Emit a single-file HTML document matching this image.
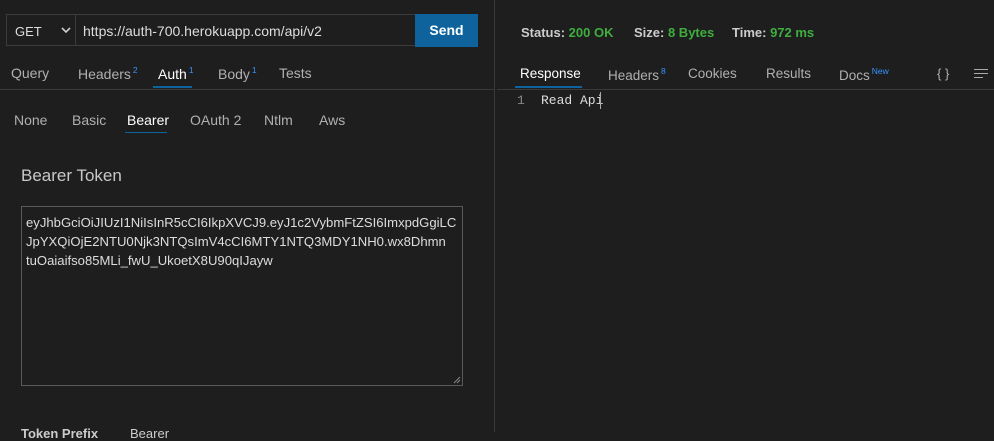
<!DOCTYPE html>
<html><head><style>
body{margin:0;width:994px;height:432px;background:#1e1e1e;font-family:"Liberation Sans",sans-serif;color:#ccc;overflow:hidden;position:relative;font-size:13px}
.a{position:absolute;white-space:nowrap}
sup{font-size:8.5px;color:#3794ff;vertical-align:6px;margin-left:2px}
.t{color:#b0b0b0}
</style></head><body>
<div class="a" style="left:494px;top:0;width:1px;height:432px;background:#3a3a3a"></div>
<div class="a" style="left:6px;top:14px;width:70px;height:32px;border:1px solid #3c3c3c;box-sizing:border-box;background:#1e1e1e"></div>
<div class="a" style="left:15px;top:24px;color:#ddd">GET</div>
<svg class="a" style="left:61px;top:27px" width="10" height="7"><path d="M1 1l4 4 4-4" stroke="#ccc" stroke-width="1.6" fill="none"/></svg>
<div class="a" style="left:76px;top:14px;width:340px;height:32px;border:1px solid #3c3c3c;border-left:none;box-sizing:border-box"></div>
<div class="a" style="left:83px;top:23px;color:#ddd;font-size:14px">https://auth-700.herokuapp.com/api/v2</div>
<div class="a" style="left:415px;top:14px;width:63px;height:33px;background:#0e639c;color:#fff;font-weight:bold;font-size:14px;text-align:center;line-height:33px">Send</div>

<div class="a t" style="left:11px;top:65px;font-size:14px">Query</div>
<div class="a t" style="left:78px;top:65px;font-size:14px">Headers<sup>2</sup></div>
<div class="a" style="left:158px;top:65px;font-size:14px;color:#fff">Auth<sup>1</sup></div>
<div class="a t" style="left:218px;top:65px;font-size:14px">Body<sup>1</sup></div>
<div class="a t" style="left:279px;top:65px;font-size:14px">Tests</div>
<div class="a" style="left:153px;top:86px;width:39px;height:2px;background:#0e639c"></div>
<div class="a" style="left:0;top:89px;width:494px;height:1px;background:#3a3a3a"></div>

<div class="a t" style="left:14px;top:112px;font-size:14px">None</div>
<div class="a t" style="left:72px;top:112px;font-size:14px">Basic</div>
<div class="a" style="left:127px;top:112px;font-size:14px;color:#fff">Bearer</div>
<div class="a t" style="left:190px;top:112px;font-size:14px">OAuth 2</div>
<div class="a t" style="left:264px;top:112px;font-size:14px">Ntlm</div>
<div class="a t" style="left:319px;top:112px;font-size:14px">Aws</div>
<div class="a" style="left:125px;top:132px;width:42px;height:1px;background:#0e639c"></div>

<div class="a" style="left:21px;top:166px;font-size:17px;color:#c8c8c8">Bearer Token</div>
<div class="a" style="left:21px;top:206px;width:442px;height:180px;border:1px solid #5a5a5a;box-sizing:border-box"></div>
<div class="a" style="left:26px;top:213px;font-size:13.1px;line-height:19px;color:#ddd">eyJhbGciOiJIUzI1NiIsInR5cCI6IkpXVCJ9.eyJ1c2VybmFtZSI6ImxpdGgiLC<br>JpYXQiOjE2NTU0Njk3NTQsImV4cCI6MTY1NTQ3MDY1NH0.wx8Dhmn<br>tuOaiaifso85MLi_fwU_UkoetX8U90qIJayw</div>
<svg class="a" style="left:453px;top:376px" width="8" height="8"><path d="M1 7L7 1M4 7L7 4" stroke="#888"/></svg>
<div class="a" style="left:21px;top:426px;font-weight:bold;color:#ccc">Token Prefix</div>
<div class="a" style="left:130px;top:426px;color:#ccc">Bearer</div>

<div class="a" style="left:521px;top:25px;font-weight:bold;font-size:13px;color:#ccc">Status: <span style="color:#3fae3f">200 OK</span></div>
<div class="a" style="left:634px;top:25px;font-weight:bold;font-size:13px;color:#ccc">Size: <span style="color:#3fae3f">8 Bytes</span></div>
<div class="a" style="left:732px;top:25px;font-weight:bold;font-size:13px;color:#ccc">Time: <span style="color:#3fae3f">972 ms</span></div>

<div class="a" style="left:520px;top:66px;font-size:13.5px;color:#fff">Response</div>
<div class="a t" style="left:608px;top:66px;font-size:13.5px">Headers<sup>8</sup></div>
<div class="a t" style="left:688px;top:66px;font-size:13.5px">Cookies</div>
<div class="a t" style="left:766px;top:66px;font-size:13.5px">Results</div>
<div class="a t" style="left:839px;top:66px;font-size:13.5px">Docs<sup>New</sup></div>
<div class="a t" style="left:937px;top:66px;font-size:13px">{ }</div>
<svg class="a" style="left:974px;top:68px" width="16" height="12"><path d="M0 1.5h14M0 5.5h14M0 9.5h9" stroke="#aaa"/></svg>
<div class="a" style="left:515px;top:86px;width:67px;height:2px;background:#0e639c"></div>
<div class="a" style="left:497px;top:89px;width:497px;height:1px;background:#3a3a3a"></div>
<div class="a" style="left:517px;top:93px;font-family:'Liberation Mono',monospace;font-size:13px;color:#888">1</div>
<div class="a" style="left:541px;top:93px;font-family:'Liberation Mono',monospace;font-size:13px;color:#ddd">Read Api</div>
<div class="a" style="left:600px;top:92px;width:1px;height:17px;background:#aaa"></div>
</body></html>
